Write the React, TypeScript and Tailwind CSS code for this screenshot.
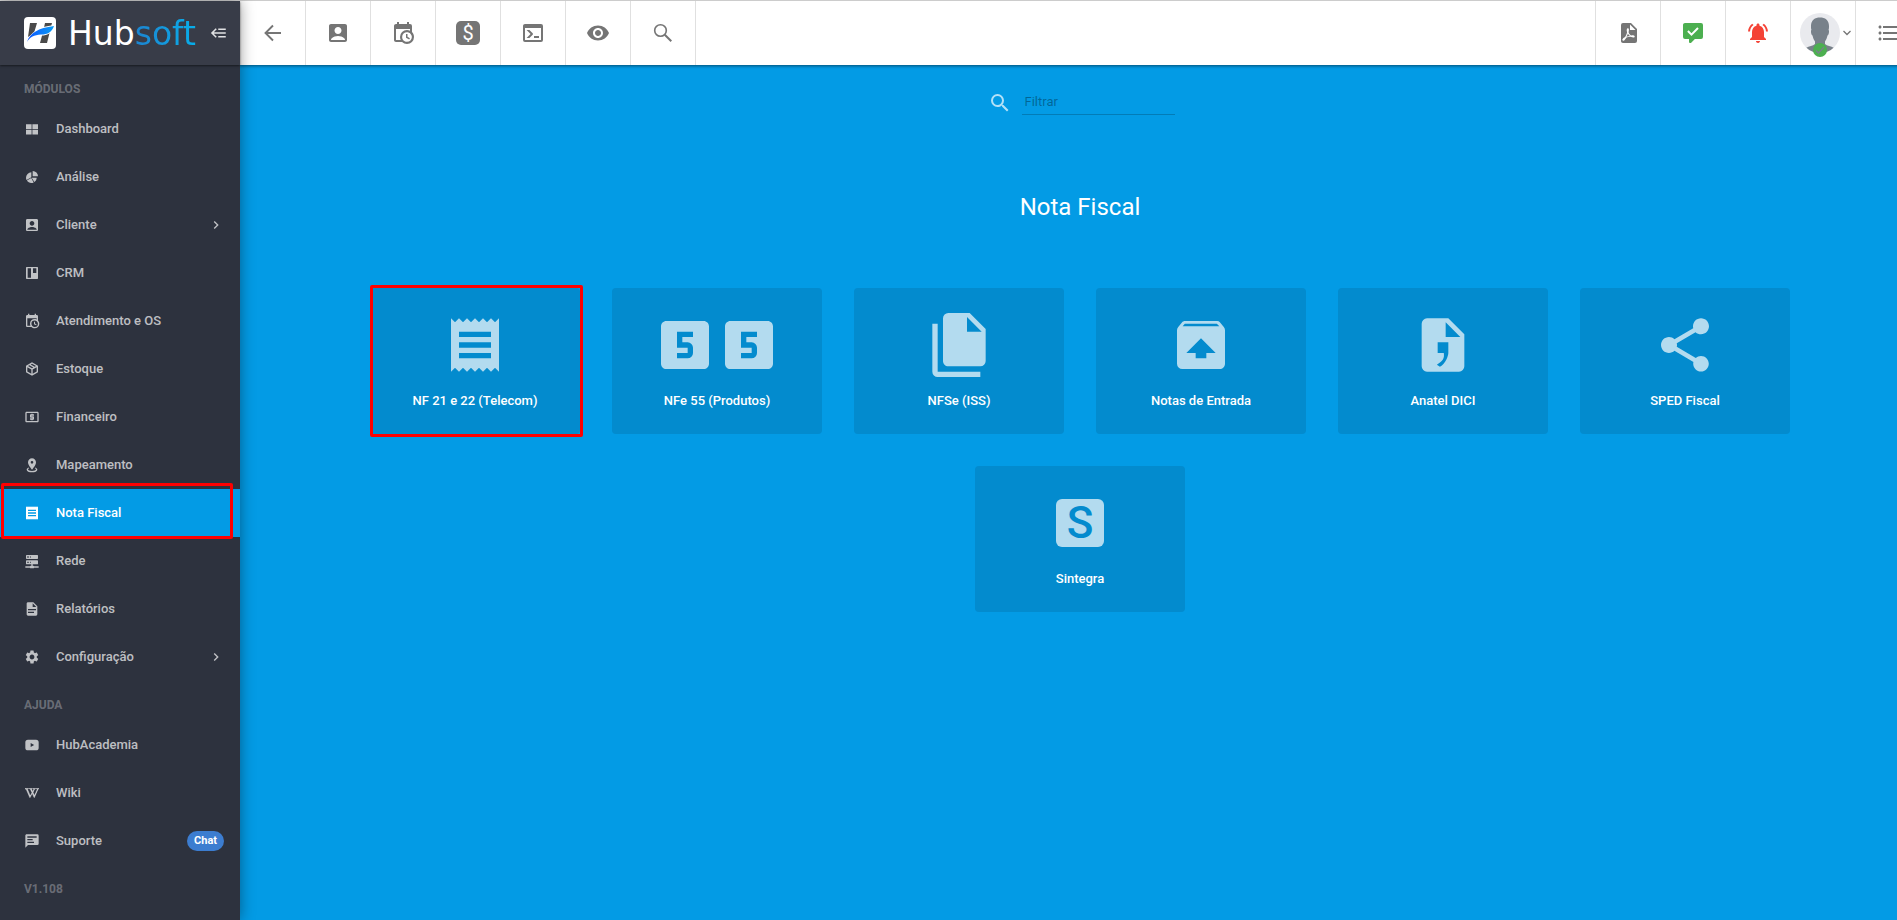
import type { ReactNode } from "react";
import { FaWikipediaW } from "react-icons/fa";
import {
  MdAccountBox,
  MdChevronRight,
  MdFormatListBulleted,
  MdLocalAtm,
  MdLooks5,
  MdNotificationsActive,
  MdReceipt,
  MdSearch,
  MdSettings,
  MdShare,
  MdUnarchive,
  MdVisibility,
} from "react-icons/md";

const paths = {
  grid: "M3 5H11.4V12H3ZM12.6 5H21V12H12.6ZM3 13.2H11.4V20.2H3ZM12.6 13.2H21V20.2H12.6Z",
  pie: "M21,11H13V3A8,8 0 0,1 21,11M19,13C19,15.78 17.58,18.23 15.43,19.67L11.58,13H19M11,21C8.22,21 5.77,19.58 4.33,17.43L10.82,13.68L14.56,20.17C13.5,20.7 12.28,21 11,21M3,13A8,8 0 0,1 11,5V12.42L3.83,16.56C3.3,15.5 3,14.28 3,13Z",
  board: "M4 3H20A1 1 0 0 1 21 4V20A1 1 0 0 1 20 21H4A1 1 0 0 1 3 20V4A1 1 0 0 1 4 3M5.5 5V19H10.5V5ZM13.5 5V12H18.5V5Z",
  calendarClock:
    "M15,13H16.5V15.82L18.94,17.23L18.19,18.53L15,16.69V13M19,8H5V19H9.67C9.24,18.09 9,17.07 9,16A7,7 0 0,1 16,9C17.07,9 18.09,9.24 19,9.67V8M5,21C3.89,21 3,20.1 3,19V5C3,3.89 3.89,3 5,3H6V1H8V3H16V1H18V3H19A2,2 0 0,1 21,5V11.1C22.24,12.36 23,14.09 23,16A7,7 0 0,1 16,23C14.09,23 12.36,22.24 11.1,21H5M16,11.15A4.85,4.85 0 0,0 11.15,16C11.15,18.68 13.32,20.85 16,20.85A4.85,4.85 0 0,0 20.85,16C20.85,13.32 18.68,11.15 16,11.15Z",
  box: "M21,16.5C21,16.88 20.79,17.21 20.47,17.38L12.57,21.82C12.41,21.94 12.21,22 12,22C11.79,22 11.59,21.94 11.43,21.82L3.53,17.38C3.21,17.21 3,16.88 3,16.5V7.5C3,7.12 3.21,6.79 3.53,6.62L11.43,2.18C11.59,2.06 11.79,2 12,2C12.21,2 12.41,2.06 12.57,2.18L20.47,6.62C20.79,6.79 21,7.12 21,7.5V16.5M12,4.15L10.11,5.22L16,8.61L17.96,7.5L12,4.15M6.04,7.5L12,10.85L13.96,9.75L8.08,6.35L6.04,7.5M5,15.91L11,19.29V12.58L5,9.21V15.91M19,15.91V9.21L13,12.58V19.29L19,15.91Z",
  marker:
    "M12,2C15.31,2 18,4.66 18,7.95C18,12.41 12,19 12,19C12,19 6,12.41 6,7.95C6,4.66 8.69,2 12,2M12,6A2,2 0 0,0 10,8A2,2 0 0,0 12,10A2,2 0 0,0 14,8A2,2 0 0,0 12,6M20,19C20,21.21 16.42,23 12,23C7.58,23 4,21.21 4,19C4,17.71 5.22,16.56 7.11,15.83L7.75,16.74C6.67,17.19 6,17.81 6,18.5C6,19.88 8.69,21 12,21C15.31,21 18,19.88 18,18.5C18,17.81 17.33,17.19 16.25,16.74L16.89,15.83C18.78,16.56 20,17.71 20,19Z",
  server:
    "M13,19H14A1,1 0 0,1 15,20H22V22H15A1,1 0 0,1 14,23H10A1,1 0 0,1 9,22H2V20H9A1,1 0 0,1 10,19H11V17H4A1,1 0 0,1 3,16V12A1,1 0 0,1 4,11H20A1,1 0 0,1 21,12V16A1,1 0 0,1 20,17H13V19M4,3H20A1,1 0 0,1 21,4V8A1,1 0 0,1 20,9H4A1,1 0 0,1 3,8V4A1,1 0 0,1 4,3M9,7H10V5H9V7M9,15H10V13H9V15M5,5V7H7V5H5M5,13V15H7V13H5Z",
  document:
    "M13,9H18.5L13,3.5V9M6,2H14L20,8V20A2,2 0 0,1 18,22H6C4.89,22 4,21.1 4,20V4C4,2.89 4.89,2 6,2M15,18V16H6V18H15M18,14V12H6V14H18Z",
  video:
    "M10,15L15.2,12L10,9V15M6 4H18Q22 4 22 8V16Q22 20 18 20H6Q2 20 2 16V8Q2 4 6 4Z",
  message:
    "M20,2A2,2 0 0,1 22,4V16A2,2 0 0,1 20,18H6L2,22V4C2,2.89 2.9,2 4,2H20M5 5V7H19V5H5M5 9V11H13V9H5M5 13V15H15V13H5Z",
  backburger: "M5,13L9,17L7.6,18.42L1.18,12L7.6,5.58L9,7L5,11H21V13H5M21,6V8H11V6H21M21,16V18H11V16H21Z",
  console:
    "M20,19V7H4V19H20M20,3A2,2 0 0,1 22,5V19A2,2 0 0,1 20,21H4A2,2 0 0,1 2,19V5C2,3.89 2.9,3 4,3H20M13,17V15H18V17H13M9.58,13L5.57,9H8.4L11.7,12.3C12.09,12.69 12.09,13.33 11.7,13.72L8.42,17H5.59L9.58,13Z",
  pdf: "M14,9H19.5L14,3.5V9M7,2H15L21,8V20A2,2 0 0,1 19,22H7C5.89,22 5,21.1 5,20V4A2,2 0 0,1 7,2M11.93,12.44C12.34,13.34 12.86,14.08 13.46,14.59L13.87,14.91C13,15.07 11.8,15.35 10.53,15.84V15.84L10.42,15.88L10.92,14.84C11.37,13.97 11.7,13.18 11.93,12.44M18.41,16.25C18.59,16.07 18.68,15.84 18.69,15.59C18.72,15.39 18.67,15.2 18.57,15.04C18.28,14.57 17.53,14.35 16.29,14.35L15,14.42L14.13,13.84C13.5,13.32 12.93,12.41 12.53,11.28L12.57,11.14C12.9,9.81 13.21,8.2 12.55,7.54C12.39,7.38 12.17,7.3 11.94,7.3H11.7C11.33,7.3 11,7.69 10.91,8.07C10.54,9.4 10.76,10.13 11.13,11.34V11.35C10.88,12.23 10.56,13.25 10.05,14.28L9.09,16.08L8.2,16.57C7,17.32 6.43,18.16 6.32,18.69C6.28,18.88 6.3,19.05 6.37,19.23L6.4,19.28L6.88,19.59L7.32,19.7C8.13,19.7 9.05,18.75 10.29,16.63L10.47,16.56C11.5,16.23 12.78,16 14.5,15.81C15.53,16.32 16.74,16.55 17.5,16.55C17.94,16.55 18.24,16.44 18.41,16.25Z",
  files:
    "M15,7H20.5L15,1.5V7M8,0H16L22,6V18A2,2 0 0,1 20,20H8C6.89,20 6,19.1 6,18V2A2,2 0 0,1 8,0M4,4V22H20V24H4A2,2 0 0,1 2,22V4H4Z",
  delimited:
    "M14,15V11H10V15H12.3C12.6,17 12,18 9.7,19.38L10.85,20.2C13,19 14,16 14,15M14,2H6A2,2 0 0,0 4,4V20A2,2 0 0,0 6,22H18A2,2 0 0,0 20,20V8L14,2M13,9V3.5L18.5,9H13Z",
};

function Icon({ name, className }: { name: keyof typeof paths; className?: string }) {
  return (
    <svg viewBox="0 0 24 24" fill="currentColor" fillRule="evenodd" className={className} aria-hidden="true">
      <path d={paths[name]} />
    </svg>
  );
}

type NavItem = {
  label: string;
  icon: ReactNode;
  expandable?: boolean;
  active?: boolean;
  badge?: string;
};

const modules: NavItem[] = [
  { label: "Dashboard", icon: <Icon name="grid" className="size-4" /> },
  { label: "Análise", icon: <Icon name="pie" className="size-4" /> },
  { label: "Cliente", icon: <MdAccountBox className="size-4" />, expandable: true },
  { label: "CRM", icon: <Icon name="board" className="size-4" /> },
  { label: "Atendimento e OS", icon: <Icon name="calendarClock" className="size-4" /> },
  { label: "Estoque", icon: <Icon name="box" className="size-4" /> },
  { label: "Financeiro", icon: <MdLocalAtm className="size-4" /> },
  { label: "Mapeamento", icon: <Icon name="marker" className="size-4" /> },
  { label: "Nota Fiscal", icon: <MdReceipt className="size-4" />, active: true },
  { label: "Rede", icon: <Icon name="server" className="size-4" /> },
  { label: "Relatórios", icon: <Icon name="document" className="size-4" /> },
  { label: "Configuração", icon: <MdSettings className="size-4" />, expandable: true },
];

const help: NavItem[] = [
  { label: "HubAcademia", icon: <Icon name="video" className="size-4" /> },
  { label: "Wiki", icon: <FaWikipediaW className="size-4 stroke-current stroke-[24] p-px" /> },
  { label: "Suporte", icon: <Icon name="message" className="size-4" />, badge: "Chat" },
];

const cards: { label: string; icon: ReactNode; highlighted?: boolean }[] = [
  { label: "NF 21 e 22 (Telecom)", icon: <MdReceipt className="size-16" />, highlighted: true },
  {
    label: "NFe 55 (Produtos)",
    icon: (
      <>
        <MdLooks5 className="size-16" />
        <MdLooks5 className="size-16" />
      </>
    ),
  },
  { label: "NFSe (ISS)", icon: <Icon name="files" className="size-16" /> },
  { label: "Notas de Entrada", icon: <MdUnarchive className="size-16" /> },
  { label: "Anatel DICI", icon: <Icon name="delimited" className="size-16" /> },
  { label: "SPED Fiscal", icon: <MdShare className="size-16" /> },
  {
    label: "Sintegra",
    icon: (
      <span className="m-2 flex size-12 items-center justify-center rounded-md bg-[#b3dbef] text-[44px] leading-none font-medium text-[#038bce]">
        S
      </span>
    ),
  },
];

function NavGroup({ title, items }: { title: string; items: NavItem[] }) {
  return (
    <section>
      <h2 className="flex h-10 items-center px-6 pt-2 text-xs font-bold text-white/30">{title}</h2>
      <ul>
        {items.map((item) => (
          <li key={item.label} className="relative">
            <a
              href="#"
              className={
                item.active
                  ? "flex h-12 items-center gap-4 bg-[#039be5] pr-4 pl-6 text-white"
                  : "flex h-12 items-center gap-4 pr-4 pl-6 text-white/70"
              }
            >
              {item.icon}
              <span className="flex-1 text-[13px] font-medium">{item.label}</span>
              {item.expandable ? <MdChevronRight className="size-4" /> : null}
              {item.badge ? (
                <span className="rounded-full bg-[#3c7dd0] px-[7px] text-[11px] leading-5 font-bold text-white">
                  {item.badge}
                </span>
              ) : null}
            </a>
            {item.active ? (
              <span className="pointer-events-none absolute -top-1.5 right-[7px] -bottom-0.5 left-px rounded-xs border-3 border-[#ff0000]" />
            ) : null}
          </li>
        ))}
      </ul>
    </section>
  );
}

function Sidebar() {
  return (
    <aside className="z-10 flex w-60 shrink-0 flex-col bg-[#2d323e] shadow-[0_0_14px_rgba(0,0,0,0.4)]">
      <div className="flex h-16 items-center bg-[#383c48] pr-3 pl-6 shadow-[0_1px_2px_rgba(0,0,0,0.5)]">
        <svg viewBox="0 0 32 32" className="size-8 shrink-0" aria-hidden="true">
          <defs>
            <linearGradient id="swoosh" x1="0" x2="1">
              <stop offset="0" stopColor="#0b54ff" />
              <stop offset="1" stopColor="#0a9cf5" />
            </linearGradient>
          </defs>
          <rect width="32" height="32" rx="4" fill="#fff" />
          <path d="M6 6H13L10 16L4 20ZM21 6H28L23 26H16L19 15Z" fill="#4a4a4a" />
          <path d="M3 26C6 15 14 10 30 8C29 16 24 18.500 17 18.500C11 19 7 20 3 26Z" fill="#fff" />
          <path d="M3 25C6 16 14 11 30 9C28 15 24 17.500 17 17.500C10 18 6 20 3 25Z" fill="url(#swoosh)" />
        </svg>
        <span className="ml-3 flex-1 font-['DejaVu_Sans',sans-serif] text-[33px] leading-none text-white">
          Hub
          <span className="bg-linear-to-r from-[#1b84d0] to-[#06aeea] bg-clip-text text-transparent">soft</span>
        </span>
        <button type="button" aria-label="Recolher menu" className="text-white/85">
          <Icon name="backburger" className="size-4.5" />
        </button>
      </div>
      <nav>
        <NavGroup title="MÓDULOS" items={modules} />
        <NavGroup title="AJUDA" items={help} />
        <p className="flex h-10 items-center px-6 pt-2 text-xs font-bold text-white/30">V1.108</p>
      </nav>
    </aside>
  );
}

function ToolbarButton({ label, children }: { label: string; children: ReactNode }) {
  return (
    <button type="button" aria-label={label} className="flex h-full w-16 items-center justify-center">
      {children}
    </button>
  );
}

function Avatar() {
  return (
    <span className="relative">
      <svg viewBox="0 0 40 40" className="size-10" aria-hidden="true">
        <clipPath id="avatar">
          <circle cx="20" cy="20" r="20" />
        </clipPath>
        <circle cx="20" cy="20" r="20" fill="#e9eaee" />
        <path
          clipPath="url(#avatar)"
          fill="#78818a"
          d="M20 4.500C25 4.500 29 7 29 13C29 14.500 29 16 28.500 17C29.500 17 29 22 27.500 22.500C27 25 26 27 25 28.500V31C27 33 31 33 34 35C36 37 37 40 37 42H3C3 40 4 37 6 35C9 33 13 33 15 31V28.500C14 27 13 25 12.500 22.500C11 22 10.500 17 11.500 17C11 16 11 14.500 11 13C11 7 15 4.500 20 4.500Z"
        />
      </svg>
      <svg viewBox="0 0 14 14" className="absolute -bottom-1 left-[13px] size-3.5" aria-hidden="true">
        <circle cx="7" cy="7" r="7" fill="#4caf50" />
        <path d="M3 7.500L5.500 10L11 4" fill="none" stroke="#78818a" strokeWidth="1.300" />
      </svg>
    </span>
  );
}

function Toolbar() {
  return (
    <header className="flex h-16 justify-between bg-white text-[#757575] shadow-[0_1px_3px_rgba(0,0,0,0.5)]">
      <div className="flex divide-x divide-[#e0e0e0] border-r border-[#e0e0e0]">
        <button type="button" aria-label="Voltar" className="flex w-[66px] items-center justify-center">
          <svg viewBox="0 0 24 24" className="size-6" fill="none" stroke="currentColor" strokeWidth="1.900" aria-hidden="true">
            <path d="M20 12H5M12 4.500L4.500 12L12 19.500" />
          </svg>
        </button>
        <div className="w-[65px]">
          <ToolbarButton label="Clientes">
            <MdAccountBox className="size-6" />
          </ToolbarButton>
        </div>
        <div className="w-[65px]">
          <ToolbarButton label="Agenda">
            <Icon name="calendarClock" className="size-6" />
          </ToolbarButton>
        </div>
        <div className="w-[65px]">
          <ToolbarButton label="Financeiro">
            <span className="flex size-6 items-center justify-center rounded-[5px] bg-[#757575] text-xl leading-none text-white">
              $
            </span>
          </ToolbarButton>
        </div>
        <div className="w-[65px]">
          <ToolbarButton label="Console">
            <Icon name="console" className="size-6" />
          </ToolbarButton>
        </div>
        <div className="w-[65px]">
          <ToolbarButton label="Visualizar">
            <MdVisibility className="size-6" />
          </ToolbarButton>
        </div>
        <ToolbarButton label="Pesquisar">
          <svg viewBox="0 0 24 24" className="size-6" fill="none" stroke="currentColor" strokeWidth="1.600" aria-hidden="true">
            <circle cx="9.500" cy="9.500" r="5.800" />
            <path d="M13.800 13.800L20.300 20.300" strokeWidth="2" />
          </svg>
        </ToolbarButton>
      </div>
      <div className="flex divide-x divide-[#e0e0e0] border-l border-[#e0e0e0]">
        <div className="w-[65px]">
          <ToolbarButton label="Arquivos PDF">
            <Icon name="pdf" className="size-6" />
          </ToolbarButton>
        </div>
        <div className="w-[65px]">
          <ToolbarButton label="Tarefas">
            <svg viewBox="0 0 24 24" className="size-6" aria-hidden="true">
              <path
                fill="#4caf50"
                d="M9,22A1,1 0 0,1 8,21V18H4A2,2 0 0,1 2,16V4C2,2.89 2.9,2 4,2H20A2,2 0 0,1 22,4V16A2,2 0 0,1 20,18H13.9L10.2,21.71C10,21.9 9.75,22 9.5,22H9Z"
              />
              <path d="M6.900 10L10.500 13.600L17 7" fill="none" stroke="#fff" strokeWidth="2" />
            </svg>
          </ToolbarButton>
        </div>
        <div className="w-[65px]">
          <ToolbarButton label="Notificações">
            <MdNotificationsActive className="size-6 text-[#f44336]" />
          </ToolbarButton>
        </div>
        <button type="button" aria-label="Perfil" className="flex w-[65px] items-center justify-end gap-[3px] pr-1">
          <Avatar />
          <svg viewBox="0 0 8 6" className="h-1.5 w-2" fill="none" stroke="currentColor" aria-hidden="true">
            <path d="M0.500 1L4 4.500L7.500 1" strokeWidth="1.300" />
          </svg>
        </button>
        <ToolbarButton label="Painel rápido">
          <MdFormatListBulleted className="size-6 shrink-0" />
        </ToolbarButton>
      </div>
    </header>
  );
}

export default function App() {
  return (
    <div className="min-h-screen overflow-hidden bg-[#039be5] font-[Roboto,sans-serif]">
      <div className="flex min-h-screen w-[calc(100%+23px)] border-t border-[#e0e0e0]">
        <Sidebar />
        <div className="min-w-0 flex-1">
          <Toolbar />
          <main className="flex flex-col items-center px-8 pt-[25px] pb-8">
            <label className="flex items-center gap-2.5 pl-0.5">
              <MdSearch className="size-6 stroke-current text-white/70" />
              <input
                type="text"
                placeholder="Filtrar"
                aria-label="Filtrar"
                className="h-[25px] w-[153px] border-b border-black/20 bg-transparent px-[3px] pb-0.5 text-[13px] text-white outline-none placeholder:text-black/35"
              />
            </label>
            <h1 className="mt-[76px] text-2xl text-white">Nota Fiscal</h1>
            <div className="mt-[65px] flex max-w-[1440px] flex-wrap justify-center gap-8">
              {cards.map((card) => (
                <button
                  type="button"
                  key={card.label}
                  className="relative flex h-[146px] w-[210px] flex-col items-center gap-3.5 rounded bg-[#038bce] pt-[25px]"
                >
                  <span className="flex text-[#b3dbef]">{card.icon}</span>
                  <span className="text-[13px] leading-5 font-medium text-white">{card.label}</span>
                  {card.highlighted ? (
                    <span className="pointer-events-none absolute -top-[3px] -right-[3px] -bottom-[3px] left-0 rounded-xs border-3 border-[#ff0000]" />
                  ) : null}
                </button>
              ))}
            </div>
          </main>
        </div>
      </div>
    </div>
  );
}
